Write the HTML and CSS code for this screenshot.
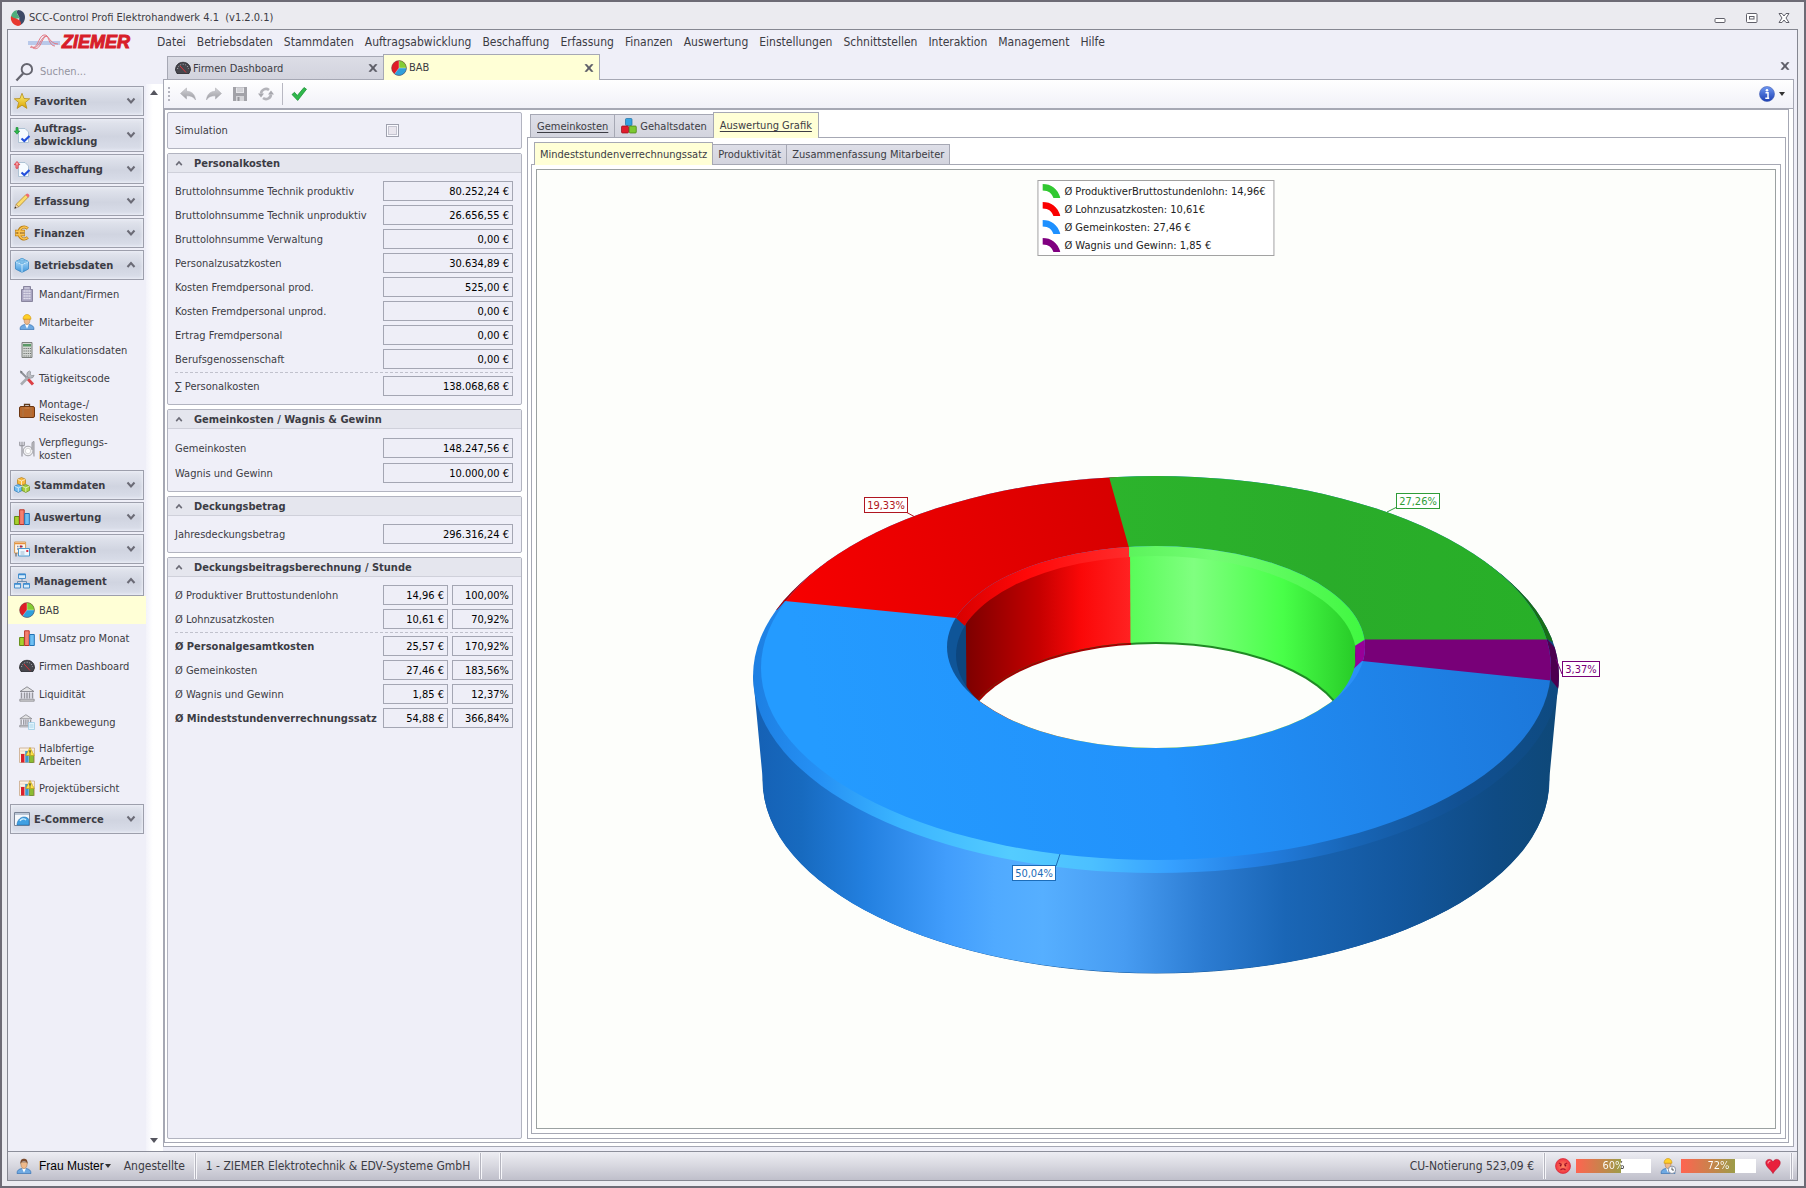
FILE: index.html
```
<!DOCTYPE html>
<html lang="de">
<head>
<meta charset="utf-8">
<title>SCC-Control Profi Elektrohandwerk</title>
<link rel="stylesheet" href="styles.css">
</head>
<body>
<svg class="sprite" width="0" height="0" aria-hidden="true">
  <defs>
    <linearGradient id="gGold" x1="0" y1="0" x2="0" y2="1"><stop offset="0" stop-color="#fff27a"/><stop offset="1" stop-color="#dba400"/></linearGradient>
    <linearGradient id="gBlue" x1="0" y1="0" x2="0" y2="1"><stop offset="0" stop-color="#bfe6ff"/><stop offset="1" stop-color="#3c94da"/></linearGradient>
    <linearGradient id="gGrey" x1="0" y1="0" x2="0" y2="1"><stop offset="0" stop-color="#d2d2d6"/><stop offset="1" stop-color="#9b9ba2"/></linearGradient>
    <radialGradient id="gFace"><stop offset="0" stop-color="#ff8460"/><stop offset="1" stop-color="#f03440"/></radialGradient>
    <linearGradient id="gInfo" x1="0" y1="0" x2="0" y2="1"><stop offset="0" stop-color="#6d96f0"/><stop offset="1" stop-color="#1c3fb4"/></linearGradient>
  </defs>
  <symbol id="i-app" viewBox="0 0 16 16"><path d="M8 0c4 0 7 3 7 7s-2 7-5 8c-2-2 0-5-1-8S5 2 8 0z" fill="#3e4a66"/><path d="M7 0C3 1 1 4 1 8l4 1 5-1C8 5 6 3 7 0z" fill="#4fae7c"/><path d="M1 6c-1 5 2 9 7 10 3 0 4-3 2-5C8 8 4 9 1 6z" fill="#e8382e"/></symbol>
  <symbol id="i-star" viewBox="0 0 16 16"><path d="M8 .3l2 5.200 5.700.3-4.400 3.700 1.600 5.900L8 12.200 3.100 15.400l1.600-5.900L.3 5.800 6 5.500z" fill="url(#gGold)" stroke="#b48d1a" stroke-width=".8"/></symbol>
  <symbol id="i-in" viewBox="0 0 16 16"><path d="M4.500 1.500h6.500l3.500 3.500v10.500h-10z" fill="#f6fbff" stroke="#9fb8cc" stroke-width=".8"/><path d="M2 .5h2v3.500h1.800L3 7.200.2 4H2z" fill="#2fb84c" stroke="#148a2e" stroke-width=".6"/><path d="M7.500 11.500l2.800 2.500L15.500 9" stroke="#2350dc" stroke-width="2.200" fill="none"/></symbol>
  <symbol id="i-out" viewBox="0 0 16 16"><path d="M4.500 1.500h6.500l3.500 3.500v10.500h-10z" fill="#f6fbff" stroke="#9fb8cc" stroke-width=".8"/><path d="M2 7.200h2V3.700h1.800L3 .5.2 3.700H2z" fill="#f8a0a4" stroke="#dc3a44" stroke-width=".9"/><path d="M7.500 11.500l2.800 2.500L15.500 9" stroke="#2350dc" stroke-width="2.200" fill="none"/></symbol>
  <symbol id="i-pencil" viewBox="0 0 16 16"><path d="M2 11.500L12 1.500l2.500 2.300-9.700 10z" fill="#fbdc6c" stroke="#b3862a" stroke-width=".8"/><path d="M11.500 2L13 .6c1 0 2.500 1 2.500 2.300L14 4.400z" fill="#ef6a74"/><path d="M2 11.500L.7 15.400l4.100-1.600z" fill="#f4dcb8" stroke="#9c7a4a" stroke-width=".5"/><path d="M.5 15.600l2-.6-1.400-1.500z" fill="#222"/></symbol>
  <symbol id="i-euro" viewBox="0 0 16 16"><path d="M13.800 3.600C10 .2 5.200 2.500 4.800 8c.4 5.500 5.200 7.800 9 4.400M1 6.300h10M1 9.700h10" fill="none" stroke="#b87c10" stroke-width="3"/><path d="M13.600 3.400C10 .6 5.400 2.700 5 8c.4 5.300 5 7.400 8.600 4.600M1.500 6.300h9M1.500 9.700h9" fill="none" stroke="#fbc452" stroke-width="1.500"/></symbol>
  <symbol id="i-cube" viewBox="0 0 16 16"><path d="M8 1.500l6.500 3v7.500L8 15.400 1.500 12V4.500z" fill="url(#gBlue)" stroke="#3d88c2" stroke-width=".8"/><path d="M1.500 4.500L8 7.500l6.500-3M8 7.500v8" stroke="#e2f5ff" stroke-width=".8" fill="none"/><ellipse cx="8" cy="2.600" rx="2" ry="1.200" fill="#8dcbf2" stroke="#4b96cd" stroke-width=".5"/><ellipse cx="4.500" cy="4.300" rx="1.800" ry="1" fill="#8dcbf2" stroke="#4b96cd" stroke-width=".5"/><ellipse cx="11.500" cy="4.300" rx="1.800" ry="1" fill="#8dcbf2" stroke="#4b96cd" stroke-width=".5"/><ellipse cx="8" cy="5.800" rx="1.800" ry="1" fill="#8dcbf2" stroke="#4b96cd" stroke-width=".5"/></symbol>
  <symbol id="i-building" viewBox="0 0 16 16"><path d="M2.500 15.500V3.500h2v-3h7v3h2v12z" fill="#a7a3bf" stroke="#77738f" stroke-width=".8"/><path d="M4.500 5h7M4.500 7.500h7M4.500 10h7M4.500 12.500h7" stroke="#eeedf7" stroke-width="1.300" stroke-dasharray="1.300 .6"/><path d="M5.500 2h5" stroke="#dddbea"/></symbol>
  <symbol id="i-worker" viewBox="0 0 16 16"><path d="M1 15.500c0-3.500 2-4.500 5-5h4c3 .5 5 1.500 5 5z" fill="#6ea9e2" stroke="#3a74b4" stroke-width=".7"/><path d="M6 10.300h4l-2 4.500z" fill="#fff"/><path d="M5 5h6c0 3.500-1 5.500-3 5.500S5 8.500 5 5z" fill="#efb98a" stroke="#a3703f" stroke-width=".5"/><path d="M4 5.200C4 2 6 .5 8 .5s4 1.500 4 4.700z" fill="#ffd02a" stroke="#cf930a" stroke-width=".6"/></symbol>
  <symbol id="i-user" viewBox="0 0 16 16"><path d="M1 15.500c0-3.500 2-4.500 5-5h4c3 .5 5 1.500 5 5z" fill="#6ea9e2" stroke="#3a74b4" stroke-width=".7"/><path d="M6 10.300h4l-2 4.500z" fill="#fff"/><path d="M4.800 4.500h6.400c0 4-1 6-3.200 6s-3.200-2-3.200-6z" fill="#efb98a" stroke="#a3703f" stroke-width=".5"/><path d="M4.500 6C4 2 6 .8 8 .8s4 1.200 3.500 5.200c-.5-2-2-2.500-3.500-2.500S5 4 4.500 6z" fill="#7a4a2c"/></symbol>
  <symbol id="i-calc" viewBox="0 0 16 16"><path d="M3 .5h10v15H3z" fill="#d4d7d4" stroke="#7d817d"/><path d="M4 2h8v2.500H4z" fill="#5c9a68"/><path d="M4.500 6.500h7.500M4.500 9h7.500M4.500 11.500h7.500M4.500 14h7.500" stroke="#6c706c" stroke-width="1" stroke-dasharray="1.200 .9"/></symbol>
  <symbol id="i-tools" viewBox="0 0 16 16"><path d="M2 2l6 6" stroke="#8d9097" stroke-width="2"/><path d="M8 8l6 6.500" stroke="#dc4046" stroke-width="3"/><path d="M2 14.500L11.500 5" stroke="#a9acb2" stroke-width="2.600"/><path d="M10.500 1a3.700 3.700 0 1 0 4.600 4.300l-2.300.4-1.500-1.500.3-2.400z" fill="#b9bcc2" stroke="#808389" stroke-width=".6"/><path d="M1 .5l2.500 1-1.800 2z" fill="#70747a"/></symbol>
  <symbol id="i-case" viewBox="0 0 16 16"><path d="M5.500 3.500V1.500h5v2" fill="none" stroke="#5e3a1c" stroke-width="1.300"/><rect x=".5" y="3.500" width="15" height="11" rx="1.500" fill="#b8682c" stroke="#6c3712"/><path d="M4 4v10M12 4v10" stroke="#8a4a1c" stroke-width="2"/><path d="M4 4v10M12 4v10" stroke="#d89458" stroke-width="1"/><path d="M5.500 5h5" stroke="#d08a50"/></symbol>
  <symbol id="i-food" viewBox="0 0 16 16"><circle cx="9" cy="10" r="4.800" fill="#f2f2f4" stroke="#a4a4aa"/><circle cx="9" cy="10" r="2.700" fill="#fff" stroke="#c8c8cc" stroke-width=".7"/><path d="M.8.800v4M3 .8v4M5.200.800v4M.8 4.800h4.400M3 5v10.500" stroke="#8d8d94" stroke-width="1.100" fill="none"/><path d="M13 9V3c0-2 1-2.500 2-2.500v15" fill="#c8c8cd" stroke="#8d8d94" stroke-width=".9"/></symbol>
  <symbol id="i-cubes" viewBox="0 0 16 16"><path d="M7.500.500l4 1.700v4.500l-4 1.700-4-1.700V2.200z" fill="#f8b93e" stroke="#b57c12" stroke-width=".7"/><path d="M4.300 7.500l3.800 1.700v4.300l-3.800 1.900L.5 13.500V9.200z" fill="#6fbcf0" stroke="#2c78b4" stroke-width=".7"/><path d="M11.800 7.500l3.700 1.700v4.300l-3.700 1.900L8 13.500V9.200z" fill="#a6cf3c" stroke="#688c14" stroke-width=".7"/><path d="M3.500 2.300l4 1.700 4-1.700M7.500 4v4M.5 9.200l3.800 1.600 3.800-1.600 3.700 1.600 3.700-1.600M4.300 11v4M11.800 11v4" fill="none" stroke="#fff" stroke-opacity=".8" stroke-width=".8"/></symbol>
  <symbol id="i-bars" viewBox="0 0 16 16"><path d="M.6 7.500h4.600v8H.6z" fill="#a8d02e" stroke="#5f8a12"/><path d="M5.600.800h4.600v14.700H5.600z" fill="#f58070" stroke="#b8332a"/><path d="M10.700 4.500h4.600v11h-4.600z" fill="#6ec0f4" stroke="#2272b4"/></symbol>
  <symbol id="i-mail" viewBox="0 0 16 16"><path d="M.6 1h11v11H.6z" fill="#fff6ea" stroke="#d39a54"/><path d="M1 2.500h10" stroke="#e8923c" stroke-width="1.500"/><path d="M3 5.500h6M3 8h5" stroke="#7f8fb0" stroke-width="1.500" stroke-dasharray="1.500 1"/><path d="M6 4.500h2v2H6z" fill="#b02040"/><path d="M2 12v3.500" stroke="#555"/><path d="M4.500 7.500h11v7.500h-11z" fill="#eef8ff" stroke="#4c98cc"/><path d="M12.300 9h2v2h-2z" fill="#dc3044"/><path d="M6.500 11h4M6.500 13h4" stroke="#88a8c4" stroke-width=".8"/></symbol>
  <symbol id="i-org" viewBox="0 0 16 16"><path d="M8 6v2.500M3.500 11V8.500h9V11" fill="none" stroke="#6c8eb0"/><path d="M4.500 1h7v4.500h-7zM.5 10.500h6V15h-6zM9.500 10.500h6V15h-6z" fill="#d6ecfc" stroke="#4a90cc"/><path d="M4.500 1.500h7M.5 11h6M9.500 11h6" stroke="#3b8ad0" stroke-width="1.500"/></symbol>
  <symbol id="i-pie" viewBox="0 0 16 16"><circle cx="8" cy="8" r="7.500" fill="#e01c26"/><path d="M8 8V.5A7.500 7.500 0 0 1 15.500 8z" fill="#84cc34"/><path d="M8 8h7.500A7.500 7.500 0 0 1 3.500 14z" fill="#2fa0dc"/><path d="M8 .5V8h7.500M8 8l-4.500 6" stroke="#fff" stroke-opacity=".5" stroke-width=".7" fill="none"/><circle cx="8" cy="8" r="7.400" fill="none" stroke="#4a4a50" stroke-opacity=".6" stroke-width=".7"/></symbol>
  <symbol id="i-gauge" viewBox="0 0 16 16"><path d="M.5 10C.5 5 4 2.300 8 2.300S15.500 5 15.500 10l-1.500 3.500H2z" fill="#46464c" stroke="#232328" stroke-width=".8"/><path d="M2.500 9c.5-3 2.800-4.800 5.500-4.800s5 1.800 5.500 4.800" fill="none" stroke="#a8a8b0" stroke-width="1" stroke-dasharray="1 1.500"/><path d="M5 6l6 6.500" stroke="#e03238" stroke-width="1"/></symbol>
  <symbol id="i-bank" viewBox="0 0 16 16"><path d="M8 .8L15 5.500H1z" fill="#e2e2e4" stroke="#85858b" stroke-width=".9"/><path d="M2.500 6.500v6M5.500 6.500v6M8 6.500v6M10.500 6.500v6M13.500 6.500v6" stroke="#95959b" stroke-width="1.500"/><path d="M.8 13.200h14.400v2H.8z" fill="#cfcfd2" stroke="#7c7c82" stroke-width=".7"/></symbol>
  <symbol id="i-bankmove" viewBox="0 0 16 16"><g transform="scale(.86)"><use href="#i-bank" width="16" height="16"/></g><path d="M9.500 8.500h6v7h-6z" fill="#e2f4fc" stroke="#9ccbe4" stroke-width=".8"/><path d="M10.500 11h4M10.500 13h4" stroke="#9ccbe4" stroke-width=".8"/></symbol>
  <symbol id="i-project" viewBox="0 0 16 16"><path d="M.5 1h15v14.500H.5z" fill="#fbf2e6" stroke="#c9a888" stroke-width=".8"/><path d="M.5 4h15M.5 7h15" stroke="#dcc7b0" stroke-width=".6"/><path d="M2 7h3.500v8.500H2z" fill="#d8202c"/><path d="M6.200 4h3.500v11.500H6.200z" fill="#3e98d0"/><path d="M10.500 8h4v7.500h-4z" fill="#8dbc30" stroke="#4f7a12" stroke-width=".6"/><path d="M11 .5l4.300 8H6.800z" fill="#ffe348" stroke="#c09a10" stroke-width=".6"/><path d="M11 3.200v2.500M11 6.500v1" stroke="#222" stroke-width="1.100"/></symbol>
  <symbol id="i-shop" viewBox="0 0 16 16"><path d="M.5 1.500h15v13H.5z" fill="#f4f8fc" stroke="#7a8496"/><path d="M1 3h14" stroke="#a8b6c8" stroke-width="1.500"/><path d="M3 14c0-4 3-8 7-8 3 0 5 1.500 5 4v4z" fill="#3fa0e2" stroke="#1c70b4" stroke-width=".6"/><path d="M6 10c1-2 4-3 6-1" stroke="#c8ecff" stroke-width="1.300" fill="none"/></symbol>
  <symbol id="i-blocks" viewBox="0 0 16 16"><rect x="4.500" y=".5" width="6.500" height="7" rx="1" fill="#34a4e0" stroke="#1c6fa4" stroke-width=".7"/><rect x=".5" y="8" width="7" height="7" rx="1" fill="#e01c2c" stroke="#960c18" stroke-width=".7"/><rect x="8.300" y="8" width="7" height="7" rx="1" fill="#7cc832" stroke="#437c10" stroke-width=".7"/></symbol>
  <symbol id="i-undo" viewBox="0 0 16 16"><path d="M6.500 2v3.200c5.500.2 8.500 3.300 9 8.800-2-3.200-4.500-4.200-9-4.200V13L.5 7.500z" fill="url(#gGrey)" stroke="#a6a6ac" stroke-width=".5"/></symbol>
  <symbol id="i-save" viewBox="0 0 16 16"><path d="M1 1h14v14H1z" fill="#a2a2a8"/><path d="M4 1.500h8V7H4z" fill="#e6e6ea"/><path d="M5 3h6M5 5h6" stroke="#b4b4ba" stroke-width=".8"/><path d="M4 10h8v5H4z" fill="#d4d4d8"/><path d="M5.500 11h2v4h-2z" fill="#96969c"/></symbol>
  <symbol id="i-refresh" viewBox="0 0 16 16"><path d="M3 7.500A5 5 0 0 1 11 4M13 8.500A5 5 0 0 1 5 12" fill="none" stroke="#b4b4ba" stroke-width="2.600"/><path d="M0 7.500h6L3 11.500zM16 8.500h-6L13 4.500z" fill="#a8a8ae"/></symbol>
  <symbol id="i-check" viewBox="0 0 16 16"><path d="M1 8.500l2.500-2.200L6.300 9.500 13 1.500l2.500 1.700L6.700 14.500z" fill="#2fb84c" stroke="#128a2c" stroke-width=".7"/></symbol>
  <symbol id="i-info" viewBox="0 0 16 16"><circle cx="8" cy="8" r="7.500" fill="url(#gInfo)" stroke="#4460b4" stroke-width=".6"/><circle cx="8" cy="4.300" r="1.300" fill="#fff"/><path d="M6.500 6.800H9V12M6.300 12.200h3.900" stroke="#fff" stroke-width="1.500" fill="none"/></symbol>
  <symbol id="i-lens" viewBox="0 0 20 20"><circle cx="12.500" cy="7" r="5.500" fill="none" stroke="#65656f" stroke-width="2"/><path d="M8.500 11.500L1.500 19" stroke="#65656f" stroke-width="2.400"/></symbol>
  <symbol id="i-down" viewBox="0 0 10 8"><path d="M1.500 1.500L5 5.500l3.500-4" fill="none" stroke="#6b6b76" stroke-width="2"/></symbol>
  <symbol id="i-up" viewBox="0 0 10 8"><path d="M1.500 6L5 2l3.500 4" fill="none" stroke="#6b6b76" stroke-width="2"/></symbol>
  <symbol id="i-x" viewBox="0 0 10 10"><path d="M1 1.500h2L5 4l2-2.500h2L6 5l3 3.500H7L5 6 3 8.500H1L4 5z" fill="#5c5c66" stroke="#5c5c66" stroke-width=".6"/></symbol>
  <symbol id="i-angry" viewBox="0 0 16 16"><circle cx="8" cy="8" r="7.500" fill="url(#gFace)" stroke="#d42838" stroke-width=".7"/><path d="M3.800 5l3 1.500M12.200 5l-3 1.500M5.500 12c1.500-1.500 3.500-1.500 5 0" stroke="#a8142a" stroke-width="1.100" fill="none"/><circle cx="5.600" cy="7.500" r=".9" fill="#8c0c20"/><circle cx="10.400" cy="7.500" r=".9" fill="#8c0c20"/></symbol>
  <symbol id="i-worktime" viewBox="0 0 16 16"><use href="#i-worker" width="16" height="16"/><circle cx="12" cy="11.800" r="3.700" fill="#fafcff" stroke="#8c93a4"/><path d="M12 9.500v2.500h2" fill="none" stroke="#333" stroke-width=".8"/></symbol>
  <symbol id="i-heart" viewBox="0 0 16 16"><path d="M8 15.500C6 11.500.8 9 .8 4.800.8 1 6 0 8 3.800 10 0 15.200 1 15.200 4.800 15.200 9 10 11.500 8 15.500z" fill="#e8203c" stroke="#b40f2c" stroke-width=".6"/><path d="M3 5.500C3 3.500 4.500 3 5.500 3.300" stroke="#ff9aa8" stroke-width="1.200" fill="none"/></symbol>
  <symbol id="i-arc" viewBox="0 0 18 14"><path d="M0 0c9 0 15 4.500 18 14h-7C9.500 9.500 6.500 6.500 0 6.500z" fill="currentColor"/></symbol>
</svg>

<div class="window">
  <header class="titlebar">
    <svg class="ic"><use href="#i-app"/></svg>
    <span class="titlebar-text">SCC-Control Profi Elektrohandwerk 4.1&nbsp; (v1.2.0.1)</span>
    <button class="winbtn" aria-label="Minimieren"><svg width="12" height="12" viewBox="0 0 12 12"><rect x="1" y="6.500" width="10" height="4" rx="1" fill="#fff" stroke="#60606a"/></svg></button>
    <button class="winbtn" aria-label="Maximieren"><svg width="12" height="12" viewBox="0 0 12 12"><rect x=".5" y="1.500" width="10.500" height="9" rx="1" fill="#fff" stroke="#60606a"/><rect x="3.500" y="4.500" width="4.500" height="2.500" fill="#fff" stroke="#60606a"/></svg></button>
    <button class="winbtn" aria-label="Schließen"><svg width="12" height="12" viewBox="0 0 12 12"><path d="M1 1.500h3l2 2.500 2-2.500h3L8 6l3 4.500H8L6 8l-2 2.500H1L4 6z" fill="#fff" stroke="#60606a"/></svg></button>
  </header>

  <div class="app">
    <div class="columns">
      <aside class="side">
        <div class="logo">
          <svg width="32" height="17" viewBox="0 0 32 17"><path d="M0 7h32v4H0z" fill="#b9c9ea"/><path d="M2 13c8 4 8-11 14-12 5-1 5 9 14 9M5 14c8 4 8-11 14-12M3 12c8 6 9-9 15-10 3 0 3 10 9 10" fill="none" stroke="#e27884" stroke-width="1"/></svg>
          <span class="logo-text">ZiEMER</span>
        </div>
        <div class="search"><svg width="19" height="20"><use href="#i-lens"/></svg><input type="search" placeholder="Suchen..." aria-label="Suchen"></div>
        <div class="scroller">
          <nav class="groups" aria-label="Module">
            <button class="grp"><svg class="ic"><use href="#i-star"/></svg><span>Favoriten</span><svg class="chev"><use href="#i-down"/></svg></button>
            <button class="grp grp-tall"><svg class="ic"><use href="#i-in"/></svg><span>Auftrags-<br>abwicklung</span><svg class="chev"><use href="#i-down"/></svg></button>
            <button class="grp"><svg class="ic"><use href="#i-out"/></svg><span>Beschaffung</span><svg class="chev"><use href="#i-down"/></svg></button>
            <button class="grp"><svg class="ic"><use href="#i-pencil"/></svg><span>Erfassung</span><svg class="chev"><use href="#i-down"/></svg></button>
            <button class="grp"><svg class="ic"><use href="#i-euro"/></svg><span>Finanzen</span><svg class="chev"><use href="#i-down"/></svg></button>
            <button class="grp grp-open" aria-expanded="true"><svg class="ic"><use href="#i-cube"/></svg><span>Betriebsdaten</span><svg class="chev"><use href="#i-up"/></svg></button>
            <div class="items">
              <a class="item" href="#"><svg class="ic"><use href="#i-building"/></svg>Mandant/Firmen</a>
              <a class="item" href="#"><svg class="ic"><use href="#i-worker"/></svg>Mitarbeiter</a>
              <a class="item" href="#"><svg class="ic"><use href="#i-calc"/></svg>Kalkulationsdaten</a>
              <a class="item" href="#"><svg class="ic"><use href="#i-tools"/></svg>Tätigkeitscode</a>
              <a class="item item-tall" href="#"><svg class="ic"><use href="#i-case"/></svg><span>Montage-/<br>Reisekosten</span></a>
              <a class="item item-tall" href="#"><svg class="ic"><use href="#i-food"/></svg><span>Verpflegungs-<br>kosten</span></a>
            </div>
            <button class="grp"><svg class="ic"><use href="#i-cubes"/></svg><span>Stammdaten</span><svg class="chev"><use href="#i-down"/></svg></button>
            <button class="grp"><svg class="ic"><use href="#i-bars"/></svg><span>Auswertung</span><svg class="chev"><use href="#i-down"/></svg></button>
            <button class="grp"><svg class="ic"><use href="#i-mail"/></svg><span>Interaktion</span><svg class="chev"><use href="#i-down"/></svg></button>
            <button class="grp grp-open" aria-expanded="true"><svg class="ic"><use href="#i-org"/></svg><span>Management</span><svg class="chev"><use href="#i-up"/></svg></button>
            <div class="items">
              <a class="item item-active" href="#"><svg class="ic"><use href="#i-pie"/></svg>BAB</a>
              <a class="item" href="#"><svg class="ic"><use href="#i-bars"/></svg>Umsatz pro Monat</a>
              <a class="item" href="#"><svg class="ic"><use href="#i-gauge"/></svg>Firmen Dashboard</a>
              <a class="item" href="#"><svg class="ic"><use href="#i-bank"/></svg>Liquidität</a>
              <a class="item" href="#"><svg class="ic"><use href="#i-bankmove"/></svg>Bankbewegung</a>
              <a class="item item-tall" href="#"><svg class="ic"><use href="#i-project"/></svg><span>Halbfertige<br>Arbeiten</span></a>
              <a class="item" href="#"><svg class="ic"><use href="#i-project"/></svg>Projektübersicht</a>
            </div>
            <button class="grp"><svg class="ic"><use href="#i-shop"/></svg><span>E-Commerce</span><svg class="chev"><use href="#i-down"/></svg></button>
          </nav>
          <div class="scrollbar"><span class="tri tri-up"></span><span class="tri tri-down"></span></div>
        </div>
      </aside>

      <div class="main">
        <nav class="menu" aria-label="Hauptmenü">
          <a href="#">Datei</a><a href="#">Betriebsdaten</a><a href="#">Stammdaten</a><a href="#">Auftragsabwicklung</a><a href="#">Beschaffung</a><a href="#">Erfassung</a><a href="#">Finanzen</a><a href="#">Auswertung</a><a href="#">Einstellungen</a><a href="#">Schnittstellen</a><a href="#">Interaktion</a><a href="#">Management</a><a href="#">Hilfe</a>
        </nav>
        <div class="doctabs">
          <div class="doctab"><svg class="ic"><use href="#i-gauge"/></svg><span>Firmen Dashboard</span><button class="x" aria-label="Tab schließen"><svg width="10" height="10"><use href="#i-x"/></svg></button></div>
          <div class="doctab doctab-active"><svg class="ic"><use href="#i-pie"/></svg><span>BAB</span><button class="x" aria-label="Tab schließen"><svg width="10" height="10"><use href="#i-x"/></svg></button></div>
          <button class="x x-all" aria-label="Alle schließen"><svg width="10" height="10"><use href="#i-x"/></svg></button>
        </div>

        <div class="frame">
          <div class="toolbar">
            <span class="grip"></span>
            <button class="tool" aria-label="Rückgängig"><svg class="ic"><use href="#i-undo"/></svg></button>
            <button class="tool" aria-label="Wiederholen"><svg class="ic ic-flip"><use href="#i-undo"/></svg></button>
            <button class="tool" aria-label="Speichern"><svg class="ic"><use href="#i-save"/></svg></button>
            <button class="tool" aria-label="Aktualisieren"><svg class="ic"><use href="#i-refresh"/></svg></button>
            <span class="tool-sep"></span>
            <button class="tool" aria-label="Übernehmen"><svg class="ic"><use href="#i-check"/></svg></button>
            <button class="tool tool-info" aria-label="Info"><svg class="ic"><use href="#i-info"/></svg><span class="caret"></span></button>
          </div>

          <div class="work">
            <form class="form">
              <section class="box sim"><label for="sim">Simulation</label><input type="checkbox" id="sim"></section>

              <section class="box">
                <h2><svg class="chev"><use href="#i-up"/></svg>Personalkosten</h2>
                <div class="rows">
                  <div class="row"><label for="f1">Bruttolohnsumme Technik produktiv</label><input id="f1" readonly value="80.252,24 €"></div>
                  <div class="row"><label for="f2">Bruttolohnsumme Technik unproduktiv</label><input id="f2" readonly value="26.656,55 €"></div>
                  <div class="row"><label for="f3">Bruttolohnsumme Verwaltung</label><input id="f3" readonly value="0,00 €"></div>
                  <div class="row"><label for="f4">Personalzusatzkosten</label><input id="f4" readonly value="30.634,89 €"></div>
                  <div class="row"><label for="f5">Kosten Fremdpersonal prod.</label><input id="f5" readonly value="525,00 €"></div>
                  <div class="row"><label for="f6">Kosten Fremdpersonal unprod.</label><input id="f6" readonly value="0,00 €"></div>
                  <div class="row"><label for="f7">Ertrag Fremdpersonal</label><input id="f7" readonly value="0,00 €"></div>
                  <div class="row"><label for="f8">Berufsgenossenschaft</label><input id="f8" readonly value="0,00 €"></div>
                  <hr>
                  <div class="row"><label for="f9">∑ Personalkosten</label><input id="f9" readonly value="138.068,68 €"></div>
                </div>
              </section>

              <section class="box">
                <h2><svg class="chev"><use href="#i-up"/></svg>Gemeinkosten / Wagnis &amp; Gewinn</h2>
                <div class="rows rows-loose">
                  <div class="row"><label for="g1">Gemeinkosten</label><input id="g1" readonly value="148.247,56 €"></div>
                  <div class="row"><label for="g2">Wagnis und Gewinn</label><input id="g2" readonly value="10.000,00 €"></div>
                </div>
              </section>

              <section class="box">
                <h2><svg class="chev"><use href="#i-up"/></svg>Deckungsbetrag</h2>
                <div class="rows">
                  <div class="row"><label for="d1">Jahresdeckungsbetrag</label><input id="d1" readonly value="296.316,24 €"></div>
                </div>
              </section>

              <section class="box box-fill">
                <h2><svg class="chev"><use href="#i-up"/></svg>Deckungsbeitragsberechnung / Stunde</h2>
                <div class="rows">
                  <div class="row row-pair"><label for="s1">Ø Produktiver Bruttostundenlohn</label><input id="s1" readonly value="14,96 €"><input aria-label="Anteil Bruttostundenlohn" readonly value="100,00%"></div>
                  <div class="row row-pair"><label for="s2">Ø Lohnzusatzkosten</label><input id="s2" readonly value="10,61 €"><input aria-label="Anteil Lohnzusatzkosten" readonly value="70,92%"></div>
                  <hr>
                  <div class="row row-pair"><label class="strong" for="s3">Ø Personalgesamtkosten</label><input id="s3" readonly value="25,57 €"><input aria-label="Anteil Personalgesamtkosten" readonly value="170,92%"></div>
                  <div class="row row-pair"><label for="s4">Ø Gemeinkosten</label><input id="s4" readonly value="27,46 €"><input aria-label="Anteil Gemeinkosten" readonly value="183,56%"></div>
                  <div class="row row-pair"><label for="s5">Ø Wagnis und Gewinn</label><input id="s5" readonly value="1,85 €"><input aria-label="Anteil Wagnis und Gewinn" readonly value="12,37%"></div>
                  <div class="row row-pair"><label class="strong" for="s6">Ø Mindeststundenverrechnungssatz</label><input id="s6" readonly value="54,88 €"><input aria-label="Anteil Mindeststundenverrechnungssatz" readonly value="366,84%"></div>
                </div>
              </section>
            </form>

            <div class="report">
              <div class="tabs" role="tablist">
                <button class="tab tab-link" role="tab">Gemeinkosten</button>
                <button class="tab" role="tab"><svg class="ic"><use href="#i-blocks"/></svg>Gehaltsdaten</button>
                <button class="tab tab-link tab-active" role="tab" aria-selected="true">Auswertung Grafik</button>
              </div>
              <div class="tabpage">
                <div class="tabs tabs-sub" role="tablist">
                  <button class="tab tab-active" role="tab" aria-selected="true">Mindeststundenverrechnungssatz</button>
                  <button class="tab" role="tab">Produktivität</button>
                  <button class="tab" role="tab">Zusammenfassung Mitarbeiter</button>
                </div>
                <div class="subpage">
                  <div class="chart">
                    <ul class="legend">
                      <li><svg class="c-green"><use href="#i-arc"/></svg>Ø ProduktiverBruttostundenlohn: 14,96€</li>
                      <li><svg class="c-red"><use href="#i-arc"/></svg>Ø Lohnzusatzkosten: 10,61€</li>
                      <li><svg class="c-blue"><use href="#i-arc"/></svg>Ø Gemeinkosten: 27,46 €</li>
                      <li><svg class="c-purple"><use href="#i-arc"/></svg>Ø Wagnis und Gewinn: 1,85 €</li>
                    </ul>
                    <svg class="donut" viewBox="537 170 1238 958" role="img" aria-label="Kostenanteile">
                      <defs>
                        <linearGradient id="side" gradientUnits="userSpaceOnUse" x1="753" y1="0" x2="1559" y2="0">
                          <stop offset="0" stop-color="#1560b4"/><stop offset=".06" stop-color="#176abf"/><stop offset=".14" stop-color="#2380e0"/><stop offset=".24" stop-color="#419dfc"/><stop offset=".3" stop-color="#50aaff"/><stop offset=".36" stop-color="#56afff"/><stop offset=".46" stop-color="#479cf2"/><stop offset=".56" stop-color="#2c7cd2"/><stop offset=".66" stop-color="#1a66b6"/><stop offset=".8" stop-color="#13579e"/><stop offset=".92" stop-color="#0f4b84"/><stop offset="1" stop-color="#0e4878"/>
                        </linearGradient>
                        <linearGradient id="rim" gradientUnits="userSpaceOnUse" x1="753" y1="0" x2="1559" y2="0">
                          <stop offset="0" stop-color="#1d7fe2"/><stop offset=".08" stop-color="#2590f4"/><stop offset=".18" stop-color="#3ab4ff"/><stop offset=".32" stop-color="#54ccff"/><stop offset=".42" stop-color="#4cc0ff"/><stop offset=".52" stop-color="#36a0ff"/><stop offset=".62" stop-color="#2480e4"/><stop offset=".74" stop-color="#1866b8"/><stop offset=".88" stop-color="#115092"/><stop offset="1" stop-color="#0e4a80"/>
                        </linearGradient>
                        <linearGradient id="topBlue" gradientUnits="userSpaceOnUse" x1="820" y1="760" x2="1560" y2="620">
                          <stop offset="0" stop-color="#249bff"/><stop offset=".45" stop-color="#2292fb"/><stop offset="1" stop-color="#1c76d8"/>
                        </linearGradient>
                        <linearGradient id="topRed" gradientUnits="userSpaceOnUse" x1="785" y1="620" x2="1130" y2="500"><stop offset="0" stop-color="#f80000"/><stop offset="1" stop-color="#d60000"/></linearGradient>
                        <linearGradient id="topGreen" gradientUnits="userSpaceOnUse" x1="1108" y1="550" x2="1547" y2="550"><stop offset="0" stop-color="#2cb42c"/><stop offset=".5" stop-color="#2aac2a"/><stop offset="1" stop-color="#28b028"/></linearGradient>
                        <linearGradient id="wallRed" gradientUnits="userSpaceOnUse" x1="965" y1="0" x2="1131" y2="0"><stop offset="0" stop-color="#7c0000"/><stop offset=".45" stop-color="#c60000"/><stop offset=".7" stop-color="#fb0808"/><stop offset="1" stop-color="#ff2222"/></linearGradient>
                        <linearGradient id="wallGreen" gradientUnits="userSpaceOnUse" x1="1131" y1="0" x2="1355" y2="0"><stop offset="0" stop-color="#5afc5a"/><stop offset=".28" stop-color="#80ff80"/><stop offset=".68" stop-color="#48ff48"/><stop offset="1" stop-color="#28cc28"/></linearGradient>
                        <linearGradient id="rimRed" gradientUnits="userSpaceOnUse" x1="956" y1="0" x2="1130" y2="0"><stop offset="0" stop-color="#d80000"/><stop offset=".4" stop-color="#ff0808"/><stop offset="1" stop-color="#ff2c2c"/></linearGradient>
                        <linearGradient id="rimGreen" gradientUnits="userSpaceOnUse" x1="1130" y1="0" x2="1365" y2="0"><stop offset="0" stop-color="#5cf45c"/><stop offset=".35" stop-color="#74fc74"/><stop offset="1" stop-color="#40f840"/></linearGradient>
                        <clipPath id="cOuter"><ellipse cx="1156" cy="676" rx="403" ry="197"/></clipPath>
                        <clipPath id="cTop"><ellipse cx="1156" cy="668" rx="395" ry="192"/></clipPath>
                        <clipPath id="cHole"><ellipse cx="1156" cy="647" rx="209" ry="101"/></clipPath>
                        <clipPath id="cWall"><ellipse cx="1156" cy="655" rx="200" ry="99"/></clipPath>
                        <clipPath id="cLip"><ellipse cx="1156" cy="737" rx="194" ry="95"/></clipPath>
                      </defs>
                      <ellipse cx="1156" cy="780" rx="393" ry="193" fill="url(#side)" stroke="#155a9e" stroke-width="1"/>
                      <path d="M753 676L763 782A393 191 0 0 0 1549 782L1559 676z" fill="url(#side)"/>
                      <g clip-path="url(#cOuter)">
                        <path d="M740 470h830v410H740z" fill="url(#rim)"/>
                        <path d="M740 470h368v130l-323 1-8 9-37-9z" fill="#b00000"/>
                        <path d="M1108 470h462v184l-10-8-13-7h-439z" fill="#176e17"/>
                        <path d="M1540 639h7l13 14 5 37-5 1-9-11z" fill="#4c0050"/>
                      </g>
                      <g clip-path="url(#cTop)">
                        <path d="M740 470h830v410H740z" fill="url(#topBlue)"/>
                        <path d="M740 470h376l20 78v99L956 618l-171-17-45-5z" fill="url(#topRed)"/>
                        <path d="M1106 466h464v174h-205l-236-92z" fill="url(#topGreen)"/>
                        <path d="M1300 639.500h270V683l-19-2.500-189-19.500-62-6z" fill="#780078"/>
                      </g>
                      <g clip-path="url(#cHole)">
                        <path d="M940 540h432v220H940z" fill="#2a90f8"/>
                        <path d="M940 600l16 18 24 14 10 128h-50z" fill="#0f5598"/>
                        <path d="M940 540h189l1 110H975l-10-24-9-8-16-14z" fill="url(#rimRed)"/>
                        <path d="M1129 540h243v100h-7l-10 6-225 10z" fill="url(#rimGreen)"/>
                        <path d="M1372 639.500h-7l-11 7v22l8-7.500h10z" fill="#980098"/>
                        <g clip-path="url(#cWall)">
                          <path d="M940 550h30v210h-30z" fill="#0d467e"/>
                          <path d="M965 540h166v200H967z" fill="url(#wallRed)"/>
                          <path d="M1130 540h240v220h-239z" fill="url(#wallGreen)"/>
                          <path d="M1355 640h6v24l-6 5z" fill="#880088"/>
                          <ellipse cx="1156" cy="737" rx="194" ry="95" fill="#1f8a24"/>
                          <path d="M960 640h171v80H960z" fill="#a00000" clip-path="url(#cLip)"/>
                          <ellipse cx="1156" cy="739" rx="193" ry="95" fill="#fdfefb"/>
                        </g>
                      </g>
                      <g class="callout callout-red"><path d="M906 512l9 5"/><rect x="864.500" y="497.500" width="43" height="15"/><text x="886" y="509">19,33%</text></g>
                      <g class="callout callout-green"><path d="M1397 507l-10 5"/><rect x="1396.500" y="493.500" width="43" height="15"/><text x="1418" y="505">27,26%</text></g>
                      <g class="callout callout-purple"><path d="M1562 674l-6-15"/><rect x="1562.500" y="661.500" width="37" height="15"/><text x="1581" y="673">3,37%</text></g>
                      <g class="callout callout-blue"><path d="M1056 866l4-12"/><rect x="1012.500" y="865.500" width="43" height="15"/><text x="1034" y="877">50,04%</text></g>
                    </svg>
                  </div>
                </div>
              </div>
            </div>
          </div>
        </div>
      </div>
    </div>

    <footer class="status">
      <button class="user"><svg class="ic"><use href="#i-user"/></svg>Frau Muster<span class="caret"></span></button>
      <span class="role">Angestellte</span>
      <span class="sep"></span>
      <span class="company">1 - ZIEMER Elektrotechnik &amp; EDV-Systeme GmbH</span>
      <span class="sep"></span><span class="sep sep-next"></span>
      <span class="quote">CU-Notierung 523,09 €</span>
      <span class="sep"></span>
      <div class="gauge"><svg class="ic"><use href="#i-angry"/></svg><div class="meter" role="progressbar" aria-valuenow="60" style="--v:60%"><span>60%</span></div></div>
      <div class="gauge"><svg class="ic"><use href="#i-worktime"/></svg><div class="meter" role="progressbar" aria-valuenow="72" style="--v:72%"><span>72%</span></div></div>
      <svg class="ic"><use href="#i-heart"/></svg>
      <span class="sep"></span>
    </footer>
  </div>
</div>
</body>
</html>
```
FILE: styles.css
```
:root {
  --line: #a6a8b4;
  --panel: #efeff8;
  --text: #3c3c44;
  --active: #ffffd6;
}

* { box-sizing: border-box; }

body {
  margin: 0;
  font: 11px/13px "DejaVu Sans Condensed", "DejaVu Sans", sans-serif;
  color: var(--text);
}

button, input { font: inherit; color: inherit; }
button { background: none; border: 0; padding: 0; margin: 0; }
a { color: inherit; text-decoration: none; }
svg { display: block; flex: none; }

.sprite { position: absolute; }
.ic { width: 16px; height: 16px; }
.ic-flip { transform: scaleX(-1); }
.chev { width: 10px; height: 8px; }

.caret {
  border: 3px solid transparent;
  border-top: 4px solid #333;
  border-bottom: 0;
}

/* Window chrome */
.window {
  display: flex;
  flex-direction: column;
  min-height: 100vh;
  padding: 0 6px 5px 5px;
  border: 2px solid #6d6b75;
  background: #ebebf0;
}

.titlebar {
  display: flex;
  align-items: center;
  gap: 20px;
  height: 27px;
  padding: 4px 8px 0 3px;
}
.titlebar .ic { margin-right: -17px; }
.titlebar-text { flex: 1; }

.app {
  flex: 1;
  display: flex;
  flex-direction: column;
  border: 1px solid #858791;
  background: var(--panel);
}

.columns { flex: 1; display: grid; grid-template-columns: 155px minmax(0, 1fr); }

/* Sidebar */
.side { display: flex; flex-direction: column; }

.logo { display: flex; align-items: center; height: 24px; padding-left: 20px; }
.logo-text {
  padding-left: 2px;
  font: italic bold 18px/20px "Liberation Sans", Arial, sans-serif;
  color: #d81e2a;
  -webkit-text-stroke: 1px #d81e2a;
}

.search { display: flex; align-items: center; gap: 6px; height: 30px; padding: 5px 10px 0 7px; }
.search input { width: 100px; padding: 0; border: 0; background: none; outline: 0; }
.search input::placeholder { color: #9494a0; opacity: 1; }

.scroller { flex: 1; display: flex; }

.groups { width: 138px; padding-top: 2px; }

.grp {
  display: flex;
  align-items: center;
  gap: 4px;
  width: 134px;
  height: 30px;
  margin: 0 2px 2px;
  padding: 0 7px 0 3px;
  border: 1px solid #9d9fac;
  background: linear-gradient(#e3e6ef, #d0d4e0 55%, #dadeea);
  box-shadow: inset 0 0 3px 1px #eceff6;
  font-weight: bold;
  text-align: left;
}
.grp span { flex: 1; }
.grp-tall { height: 34px; }
.grp-open { margin-bottom: 0; }

.items { margin-bottom: 2px; }
.item { display: flex; align-items: center; gap: 4px; height: 28px; padding-left: 11px; }
.item-tall { height: 38px; }
.item-active { background: var(--active); }

.scrollbar {
  flex: 1;
  display: flex;
  flex-direction: column;
  justify-content: space-between;
  padding: 6px 4px 8px;
  background: linear-gradient(90deg, #f3f3fa, #fff 40%);
}
.tri { width: 0; border: 4px solid transparent; }
.tri-up { border-top: 0; border-bottom: 5px solid #55555e; }
.tri-down { border-bottom: 0; border-top: 5px solid #55555e; }

/* Main area */
.main { display: flex; flex-direction: column; padding: 0 3px 4px 0; }

.menu {
  display: flex;
  align-items: center;
  gap: 11px;
  height: 24px;
  margin-left: -6px;
  font-size: 12px;
}

.doctabs { display: flex; align-items: flex-end; height: 25px; padding-left: 4px; }
.doctab {
  display: flex;
  align-items: center;
  gap: 2px;
  width: 217px;
  height: 23px;
  padding: 0 5px 0 7px;
  border: 1px solid var(--line);
  border-bottom: 0;
  background: linear-gradient(#dcdde6, #d2d3dd);
}
.doctab span { flex: 1; }
.doctab-active {
  height: 26px;
  margin: 0 0 -1px -1px;
  background: var(--active);
  z-index: 1;
}
.x-all { margin: 0 4px 8px auto; }

.frame {
  flex: 1;
  display: flex;
  flex-direction: column;
  border: 1px solid var(--line);
  background: #fff;
}

.toolbar {
  display: flex;
  align-items: center;
  gap: 10px;
  height: 29px;
  padding: 0 8px 0 4px;
  border-bottom: 1px solid var(--line);
  background: linear-gradient(#fff, #f1f1f8);
}
.grip { width: 2px; height: 14px; background: repeating-linear-gradient(#b4b4be 0 2px, transparent 2px 4px); }
.tool-sep { width: 1px; height: 22px; margin: 0 -2px; background: #b8b8c2; }
.tool { display: flex; align-items: center; gap: 4px; }
.tool-info { margin-left: auto; }

.work {
  flex: 1;
  display: grid;
  grid-template-columns: 355px minmax(0, 1fr);
  gap: 5px;
  margin: 0 4px 3px 0;
  padding: 2px 2px 3px;
  border: 1px solid var(--line);
}

/* Form */
.form { display: flex; flex-direction: column; gap: 4px; margin: 0; }

.box { border: 1px solid #b2b4c0; border-radius: 2px; background: var(--panel); }
.box-fill { flex: 1; }

.box h2 {
  display: flex;
  align-items: center;
  gap: 11px;
  height: 19px;
  margin: 0;
  padding-left: 7px;
  border-bottom: 1px solid #cfd0da;
  background: #e5e6ee;
  font-size: 11px;
}
.box h2 .chev { width: 8px; height: 7px; }

.sim { display: flex; align-items: center; height: 37px; padding-left: 7px; }
.sim label { width: 211px; }
.sim input {
  appearance: none;
  width: 13px;
  height: 13px;
  margin: 0;
  border: 1px solid #9fa1ae;
  background: #e9e6ee;
  box-shadow: inset 0 0 0 1px #fafaff, inset 0 0 0 2px #c4c4d0;
}

.rows { display: flex; flex-direction: column; gap: 4px; padding: 8px 8px 8px 7px; }
.rows-loose { gap: 5px; padding-top: 9px; }
.row { display: grid; grid-template-columns: minmax(0, 1fr) 130px; align-items: center; height: 20px; }
.row-pair { grid-template-columns: minmax(0, 1fr) 65px 61px; column-gap: 4px; }
.row-pair label { margin-right: -4px; }
.row label { white-space: nowrap; }
.row input {
  width: 100%;
  height: 20px;
  padding: 0 3px;
  border: 1px solid #a4a6b3;
  background: #eeeef7;
  color: #000;
  text-align: right;
}
.strong { font-weight: bold; }
.rows hr { width: 100%; margin: -1px 0; border: 0; border-top: 1px dashed #c0c1cc; }

/* Report tabs */
.report { display: flex; flex-direction: column; }

.tabs { display: flex; align-items: flex-end; height: 25px; padding-left: 3px; }
.tab {
  display: flex;
  align-items: center;
  gap: 3px;
  height: 23px;
  padding: 0 6px;
  border: 1px solid var(--line);
  border-bottom: 0;
  background: linear-gradient(#dedfe8, #d3d4de);
  white-space: nowrap;
}
.tab + .tab { margin-left: -1px; }
.tab-active { height: 26px; margin-bottom: -1px; background: var(--active); z-index: 1; }
.tab-link { text-decoration: underline; text-underline-offset: 2px; }

.tabs-sub { height: 22px; }
.tabs-sub .tab { height: 20px; padding: 0 5px; }
.tabs-sub .tab-active { height: 23px; }

.tabpage {
  flex: 1;
  display: flex;
  flex-direction: column;
  padding: 4px 4px 4px 3px;
  border: 1px solid var(--line);
}
.subpage { flex: 1; display: flex; padding: 4px; border: 1px solid var(--line); }

.chart {
  position: relative;
  flex: 1;
  display: flex;
  border: 1px solid #9ba1a1;
  background: #fdfefb;
}
.donut { flex: 1; width: 100%; min-width: 0; }

.legend {
  position: absolute;
  top: 10px;
  left: 50%;
  transform: translateX(-50%);
  margin: 0;
  padding: 1px 8px 1px 4px;
  border: 1px solid #a2a2a2;
  background: #fff;
  color: #222;
  list-style: none;
  white-space: nowrap;
}
.legend li { display: flex; align-items: center; gap: 4px; height: 18px; }
.legend svg { width: 18px; height: 14px; }
.c-green { color: #32c832; }
.c-red { color: #fa0000; }
.c-blue { color: #1e90ff; }
.c-purple { color: #800080; }

.callout rect { fill: #fff; stroke: currentColor; }
.callout path { stroke: currentColor; }
.callout text { fill: currentColor; text-anchor: middle; font-size: 11px; }
.callout-red { color: #b01620; }
.callout-green { color: #2f9c38; }
.callout-purple { color: #780078; }
.callout-blue { color: #1c6cb8; }

/* Status bar */
.status {
  display: flex;
  align-items: center;
  gap: 9px;
  height: 29px;
  padding: 0 4px 0 8px;
  border-top: 1px solid #8c8e9a;
  background: linear-gradient(#ededf3, #d7d7df 50%, #bfbfca);
  font-size: 12px;
}
.user {
  display: flex;
  align-items: center;
  gap: 7px;
  color: #000;
  font: 12px/15px "Liberation Sans", Arial, sans-serif;
}
.user .caret { margin-left: -6px; }
.role { padding-left: 4px; }
.sep { width: 3px; height: 26px; border: solid #f6f6fa; border-width: 0 1px; background: #b4b4be; }
.sep-next { margin-left: 8px; }
.quote { margin-left: auto; }
.gauge { display: flex; align-items: center; gap: 5px; }
.meter {
  width: 75px;
  height: 14px;
  background: linear-gradient(90deg, #ff6450, #9c9c48) 0 0 / var(--v) 100% no-repeat #fff;
  font-size: 11px;
  line-height: 14px;
  text-align: center;
}
.meter span {
  display: block;
  background: linear-gradient(90deg, #fff var(--v), #222 var(--v));
  background-clip: text;
  color: transparent;
}
```
